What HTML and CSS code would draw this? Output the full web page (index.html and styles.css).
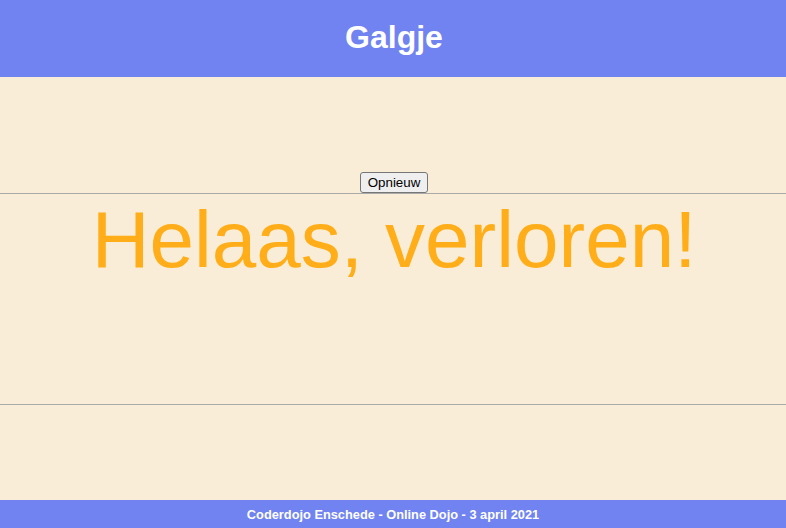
FILE: index.html
```html
<!DOCTYPE html>
<html>
<head>
<meta charset="utf-8">
<link rel="stylesheet" href="styles.css">
</head>
<body>
<header class="top">Galgje</header>
<main class="game">
  <div class="controls"><button class="btn">Opnieuw</button></div>
  <div class="stage">
    <div class="message">Helaas, verloren!</div>
  </div>
</main>
<footer class="bottom">Coderdojo Enschede - Online Dojo - 3 april 2021</footer>
</body>
</html>
```
FILE: styles.css
```css
html, body {
  margin: 0;
  padding: 0;
  height: 100%;
}
body {
  display: flex;
  flex-direction: column;
  background: #f9edd7;
  font-family: "Liberation Sans", Arial, sans-serif;
}
.top {
  height: 77px;
  flex: none;
  background: #7083f0;
  color: #fff;
  font-weight: bold;
  font-size: 32px;
  display: flex;
  align-items: center;
  justify-content: center;
  padding-bottom: 2px;
  padding-left: 2px;
  box-sizing: border-box;
}
.game {
  flex: 1;
  display: flex;
  flex-direction: column;
}
.controls {
  height: 116px;
  display: flex;
  align-items: flex-end;
  justify-content: center;
}
.btn {
  font-family: "Liberation Sans", Arial, sans-serif;
  font-size: 13.33px;
  height: 21px;
  padding: 1px 7px;
  margin-left: 2px;
  border: 1px solid #767676;
  border-radius: 3px;
  background: #efefef;
  color: #000;
}
.stage {
  height: 210px;
  border-top: 1px solid #aaa;
  border-bottom: 1px solid #aaa;
  text-align: center;
}
.message {
  color: #ffae1a;
  font-size: 80px;
  line-height: 92px;
  padding-left: 2px;
}
.bottom {
  height: 28px;
  flex: none;
  background: #7083f0;
  color: #fff;
  font-weight: bold;
  font-size: 12.8px;
  display: flex;
  align-items: center;
  justify-content: center;
}
```
